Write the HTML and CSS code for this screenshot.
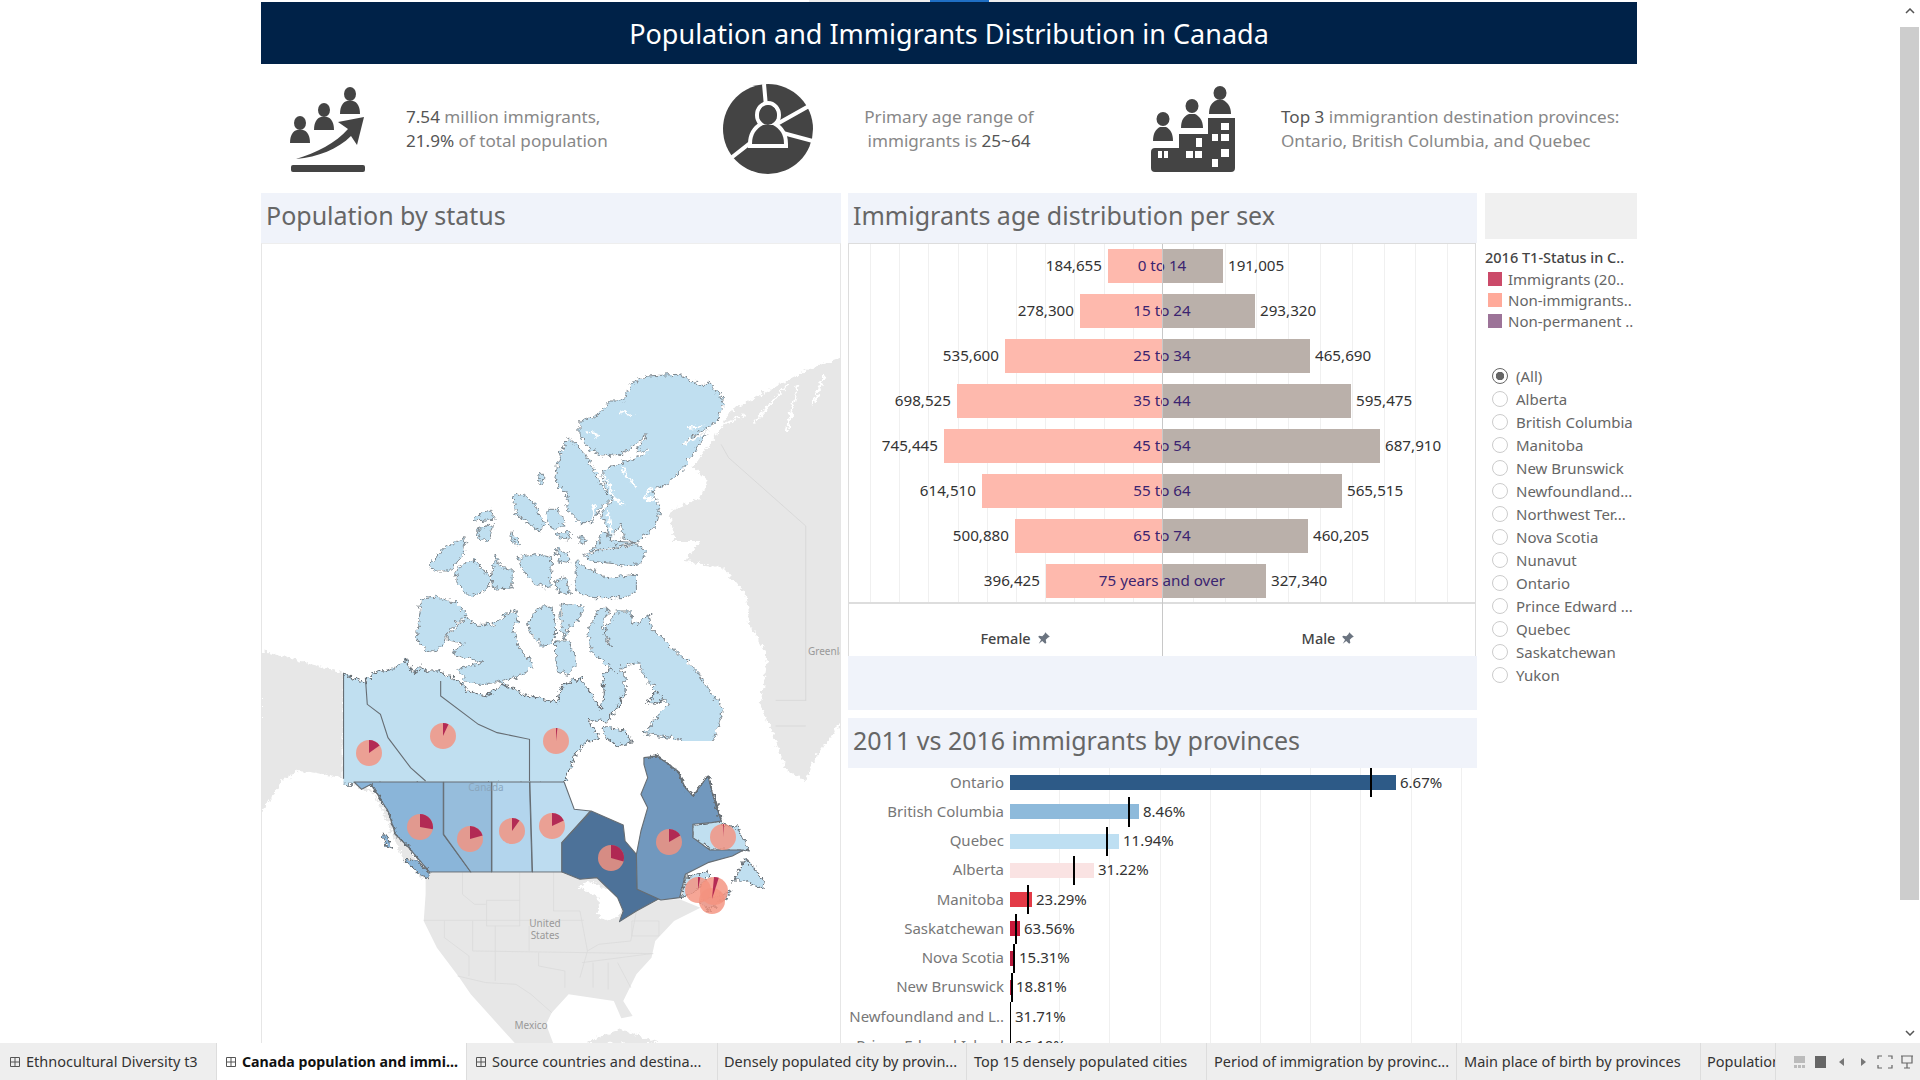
FILE: index.html
```html
<!DOCTYPE html>
<html lang="en">
<head>
    <meta charset="UTF-8">
    <title>Population and Immigrants Distribution in Canada</title>
    <link rel="stylesheet" href="styles.css">
</head>
<body>
    <div class="viewport">
        <div class="page">
            <div class="top-strip"><span></span></div>
            <h1 class="title">Population and Immigrants Distribution in Canada</h1>

            <div class="stats">
                <div class="stat stat-one">
                    <svg class="icon" width="76" height="88" viewBox="0 0 76 88">
                        <g class="glyph">
                            <ellipse cx="10" cy="38" rx="6" ry="7"/><path d="M0 58C0 50 3 46 7 45H13C17 46 20 50 20 58Z"/>
                            <ellipse cx="34" cy="25" rx="6" ry="7"/><path d="M24 45C24 37 27 33 31 32H37C41 33 44 37 44 45Z"/>
                            <ellipse cx="60" cy="9" rx="6" ry="7"/><path d="M50 29C50 21 53 17 57 16H63C67 17 70 21 70 29Z"/>
                            <path d="M6 74C26 68 46 58 58 44L48 37L74 32L67 60L61 51C48 64 28 72 6 74Z"/>
                            <rect x="1" y="80" width="74" height="7" rx="2"/>
                        </g>
                    </svg>
                    <p><b>7.54</b> million immigrants,<br><b>21.9%</b> of total population</p>
                </div>
                <div class="stat stat-two">
                    <svg class="icon" width="90" height="90" viewBox="0 0 90 90">
                        <circle class="glyph" cx="45" cy="45" r="45"/>
                        <path class="gap" d="M45 45L41 0M45 45L86 22M45 45L90 57M45 45L8 74"/>
                        <ellipse class="halo" cx="45" cy="31" rx="9" ry="10"/>
                        <path class="halo" d="M29 60C29 50 33 45 40 41H50C57 45 61 50 61 60Z"/>
                        <ellipse class="glyph" cx="45" cy="31" rx="9" ry="10"/>
                    </svg>
                    <p class="centered">Primary age range of<br>immigrants is <b>25~64</b></p>
                </div>
                <div class="stat stat-three">
                    <svg class="icon" width="84" height="86" viewBox="0 0 84 86">
                        <g class="glyph">
                            <ellipse cx="12" cy="33" rx="6.5" ry="7"/><path d="M2 55C2 47 5 43 9 41H15C19 43 22 47 22 55Z"/>
                            <ellipse cx="41" cy="20" rx="6.5" ry="7"/><path d="M30 42C30 34 33 30 38 28H44C48 30 52 34 52 42Z"/>
                            <ellipse cx="69" cy="7" rx="6.5" ry="7"/><path d="M58 28C58 20 61 16 66 14H72C76 16 80 20 80 28Z"/>
                            <path d="M0 66Q0 62 4 62H28V48H57V32H84V82Q84 86 80 86H4Q0 86 0 82Z"/>
                        </g>
                        <g class="windows">
                            <rect x="7" y="65" width="4" height="7"/><rect x="13" y="65" width="4" height="7"/>
                            <rect x="35" y="65" width="7" height="7"/><rect x="44" y="65" width="7" height="7"/>
                            <rect x="45" y="52" width="6" height="9"/>
                            <rect x="61" y="48" width="6" height="7"/><rect x="70" y="48" width="8" height="7"/>
                            <rect x="70" y="37" width="8" height="7"/><rect x="70" y="63" width="8" height="8"/>
                            <rect x="61" y="73" width="6" height="8"/>
                        </g>
                    </svg>
                    <p><b>Top 3</b> immigrantion destination provinces:<br>Ontario, British Columbia, and Quebec</p>
                </div>
            </div>

            <div class="panels">
                <section class="panel">
                    <h2 class="panel-head">Population by status</h2>
                    <div class="map">
                        <svg width="578" height="800" viewBox="262 243 578 800">
                            <defs>
                                <filter id="rough" filterUnits="userSpaceOnUse" x="0" y="-1100" width="1600" height="2300">
                                    <feTurbulence type="fractalNoise" baseFrequency=".08" numOctaves="3" seed="4"/>
                                    <feDisplacementMap in="SourceGraphic" scale="24" xChannelSelector="R" yChannelSelector="G"/>
                                </filter>
                                <clipPath id="east-of-yukon"><rect x="222" y="-1100" width="1400" height="2300"/></clipPath>
                            </defs>
                            <g transform="translate(260 680) scale(.3764 .3333)">
                                <g class="land" filter="url(#rough)">
                                    <path d="M0 -90L35 -85L100 -60L222 -25V293L150 275L100 270L60 300L5 395H0Z"/>
                                    <path d="M222 293L280 310L340 390L360 460L395 500L440 590L425 590L380 530L355 470L340 420L300 340L260 320Z"/>
                                    <path d="M1540 -970L1490 -950L1380 -890L1250 -810L1225 -760L1150 -640L1190 -600L1170 -550L1090 -510L1100 -420L1170 -420L1130 -360L1230 -340L1290 -260L1300 -170L1350 -70L1330 70L1370 180L1400 270L1450 300L1470 240L1560 100V-970Z"/>
                                    <path d="M860 1090L900 1070L960 1045L1060 1085Z"/>
                                    <path class="fjord" d="M1310 -770L1400 -890M1400 -750L1430 -890M1470 -830L1500 -920M1230 -770L1290 -800"/>
                                </g>
                                <path class="faint" d="M1225 -710L1245 -670L1450 -465V60M1370 58H1450M1370 135H1450"/>
                                <path class="land" d="M440 575H800L850 595L895 590L950 650L965 690L955 722L1000 690L1065 655L1115 655L1170 680L1100 720L1050 780L1040 830L1000 880L965 960L990 1005L960 1012L940 960L820 940L775 995L760 1030L780 1090H680L640 1040L560 940L530 890L470 800L435 720L440 640Z"/>
                                <path class="inland" filter="url(#rough)" d="M840 620L880 600L950 640L970 660L960 700L925 720L900 715L900 650L860 625Z"/>
                                <g class="border-us">
                                    <path d="M435 718H860M490 720V770L555 825V885M565 720V810M625 735V900M715 735V810M602 658H690V735H602ZM690 575V658M780 575V690H850L870 810L850 890"/>
                                    <path d="M565 810L1045 818M525 885L600 905L680 910L720 940L775 995M855 845L1040 818M988 720H1060V765H988ZM885 845V920M925 845V925M950 845L985 920M740 815V855L810 870V920M538 575V640L570 670H600M1000 690L985 780L900 790L870 810"/>
                                </g>
                                <g class="prov">
                                    <path class="p-north" filter="url(#rough)" clip-path="url(#east-of-yukon)" d="M210 -25L280 5L300 -25L350 -35L385 -65L410 -20L425 -45L440 -30L475 -30L530 0L550 30L600 45L650 10L700 40L790 65L800 15L850 -10L870 20L905 85L915 40L910 -10L930 -40L970 -30L970 40L925 120L870 115L905 175L870 180L835 225L808 310H210Z"/>
                                    <path class="p-fill" d="M222 20H300V293H222Z"/>
                                    <path class="p-north" filter="url(#rough)" d="M910 135L970 150L990 185L950 195L920 170Z"/>
                                    <path class="p-north" filter="url(#rough)" d="M1050 30L1080 40L1060 70L1030 65Z"/>
                                    <path class="p-bc" d="M250 303H487V460L560 573H450L395 500L360 460L340 390L295 310L270 325Z"/>
                                    <path class="p-bc" filter="url(#rough)" d="M385 535L415 540L450 575L445 590L410 570Z"/>
                                    <path class="p-bc" filter="url(#rough)" d="M325 455L340 465L350 505L335 495Z"/>
                                    <path class="p-ab" d="M488 303H615V573H560L488 460Z"/>
                                    <path class="p-sk" d="M616 303H716L723 573H616Z"/>
                                    <path class="p-mb" d="M717 303H808L835 385L878 390L802 485V573H724Z"/>
                                    <path class="p-on" d="M880 390L965 432L970 480L1000 520L1002 625L1065 650L1000 690L955 722L965 690L950 650L895 590L850 595L802 573V485Z"/>
                                    <path class="p-north" filter="url(#rough)" d="M1190 285L1230 430L1270 440L1300 510L1285 507H1195L1150 470V430L1200 425L1225 420L1205 350Z"/>
                                    <path class="p-qc" d="M1020 230L1055 225L1110 270L1130 320L1150 345L1190 285L1205 350L1225 420L1200 425L1150 430L1150 470L1195 507H1285L1255 525L1190 545L1130 580L1115 650L1065 657L1002 625L1000 520L1012 450L1030 380L1012 340L1030 290L1020 250Z"/>
                                    <path class="p-north" filter="url(#rough)" d="M1290 530L1340 600L1335 625L1290 600L1255 600L1280 560Z"/>
                                    <path class="p-north" filter="url(#rough)" d="M1130 590L1190 570L1195 582L1150 640L1120 650Z"/>
                                    <path class="p-north" filter="url(#rough)" d="M1170 660L1250 630L1240 650L1190 690Z"/>
                                </g>
                                <path class="coast" filter="url(#rough)" d="M295 310L340 390L360 460L395 500L450 575M1190 285L1205 350L1225 420M1020 230L1055 225L1110 270L1130 320L1150 345L1190 285"/>
                                <path class="terr" d="M222 -25V293M280 -10L285 70L320 100L340 170L400 260L440 300M480 0V45L580 130L630 155L716 175V300"/>
                            </g>
                            <g class="prov islands" transform="translate(260 340) scale(.3764 .3333)">
                                <g filter="url(#rough)">
                                <path class="p-north" d="M430 775L470 768L520 785L550 820L500 870L490 910L455 935L430 915L415 890Z"/>
                                <path class="p-north" d="M500 880L550 825L565 850L600 850L615 855L640 830L655 820L680 810L685 840L670 860L690 920L725 970L700 1000L650 1020L610 1030L560 1030L520 985L580 970L595 965L540 950L510 935L540 910L500 900Z"/>
                                <path class="p-north" d="M710 850L740 800L775 795L785 850L785 890L755 920L720 880Z"/>
                                <path class="p-north" d="M800 790L860 795L850 830L820 860L810 895L800 860Z"/>
                                <path class="p-north" d="M785 900L820 900L845 970L820 1000L790 990L785 940Z"/>
                                <path class="p-north" d="M870 870L900 805L930 805L910 850L925 910L935 920L915 870L945 810L985 810L990 850L1035 825L1040 860L1080 905L1160 990L1230 1105V1115L1190 1240L1100 1190L1020 1180L1060 1120L1085 1090L1030 1020L1005 965L960 980L950 1000L900 950L880 930Z"/>
                                <path class="p-north" d="M860 640L1000 610L1022 630L1015 665L985 675L880 660Z"/>
                                <path class="p-north" d="M840 660L870 680L920 710L1000 700L1000 750L970 770L880 770L840 750Z"/>
                                <path class="p-north" d="M785 620L820 640L820 665L795 660Z"/>
                                <path class="p-north" d="M450 680L490 620L545 590L540 640L505 690L470 690Z"/>
                                <path class="p-north" d="M525 680L570 655L610 710L610 740L560 770L520 720Z"/>
                                <path class="p-north" d="M615 700L625 640L640 680L670 685L670 740L620 745L615 720Z"/>
                                <path class="p-north" d="M685 650L740 640L775 650L770 740L730 730L700 690Z"/>
                                <path class="p-north" d="M785 720L815 710L825 760L790 750Z"/>
                                <path class="p-north" d="M570 530L610 505L625 535L570 540Z"/>
                                <path class="p-north" d="M575 565L620 550L610 595L585 600Z"/>
                                <path class="p-north" d="M672 465L700 460L730 490L755 550L745 570L710 545L680 520Z"/>
                                <path class="p-north" d="M762 505L790 505L810 545L780 570L765 540Z"/>
                                <path class="p-north" d="M790 575L825 575L820 595L795 590Z"/>
                                <path class="p-north" d="M850 585L870 595L865 610L850 605Z"/>
                                <path class="p-north" d="M670 575L690 610L680 615L665 585Z"/>
                                <path class="p-north" d="M740 400L757 400L755 430L745 430Z"/>
                                <path class="p-north" d="M905 570L920 575L935 600L1000 605L880 630L900 600Z"/>
                                <path class="p-north" d="M960 180L990 125L1030 105L1110 100L1165 130L1200 130L1232 180L1215 240L1120 310L1190 270L1150 340L1115 395L1080 430L1040 450L1065 500L1050 560L1000 605L965 590L960 550L930 595L920 550L905 520L935 480L915 430L910 390L945 370L1000 350L1030 330L1000 330L1030 280L960 340L910 345L870 320L850 280L850 240L900 220L930 180Z"/>
                                <path class="p-north" d="M820 290L850 320L880 370L905 430L935 470L900 510L880 545L850 545L820 510L815 465L785 420L790 370L800 330Z"/>
                                <path class="cut" d="M880 350L940 365L1035 330M960 380L1000 440M1120 310L1190 272M915 400L940 470L965 490M890 490L880 540M1060 480L1020 470L1040 440M925 510L935 590M1140 260L1180 255M960 210L990 225M870 270L900 285"/>
                                </g>
                            </g>
                            <g class="pies">
                                <g transform="translate(369 752)"><circle r="13"/><path d="M0 0V-13A13 13 0 0 1 10.6 -7.5Z"/></g>
                                <g transform="translate(443 735)"><circle r="13"/><path d="M0 0V-13A13 13 0 0 1 5.5 -11.8Z"/></g>
                                <g transform="translate(556 740)"><circle r="13"/><path d="M0 0V-13A13 13 0 0 1 1.4 -12.9Z"/></g>
                                <g transform="translate(420 826)"><circle r="13"/><path d="M0 0V-13A13 13 0 0 1 12.8 2.3Z"/></g>
                                <g transform="translate(470 838)"><circle r="13"/><path d="M0 0V-13A13 13 0 0 1 12.6 -3.4Z"/></g>
                                <g transform="translate(512 830)"><circle r="13"/><path d="M0 0V-13A13 13 0 0 1 7.5 -10.6Z"/></g>
                                <g transform="translate(552 825)"><circle r="13"/><path d="M0 0V-13A13 13 0 0 1 11.8 -5.5Z"/></g>
                                <g transform="translate(611 857)"><circle r="13"/><path d="M0 0V-13A13 13 0 0 1 12.6 3.4Z"/></g>
                                <g transform="translate(669 841)"><circle r="13"/><path d="M0 0V-13A13 13 0 0 1 11.3 -6.5Z"/></g>
                                <g transform="translate(723 836)"><circle r="13"/><path d="M0 0V-13A13 13 0 0 1 .9 -13Z"/></g>
                                <g transform="translate(698 889)"><circle r="13"/><path d="M0 0V-13A13 13 0 0 1 2.3 -12.8Z"/></g>
                                <g transform="translate(712 900)"><circle r="13"/></g>
                                <g transform="translate(714 890)"><circle r="14"/><path d="M-2 8L0 -14A14 14 0 0 1 4.8 -13.2Z"/></g>
                            </g>
                            <text class="map-label canada" x="486" y="790" text-anchor="middle">Canada</text>
                            <text class="map-label" x="545" y="926" text-anchor="middle">United</text>
                            <text class="map-label" x="545" y="938" text-anchor="middle">States</text>
                            <text class="map-label" x="531" y="1028" text-anchor="middle">Mexico</text>
                            <text class="map-label" x="808" y="654">Greenland</text>
                        </svg>
                    </div>
                </section>

                <section class="panel">
                    <h2 class="panel-head">Immigrants age distribution per sex</h2>
                    <div class="pyramid">
                        <div class="pyramid-plot">
                            <div class="age-row">
                                <div class="side side-f"><span>184,655</span><i style="width:54px"></i></div>
                                <div class="side side-m"><i style="width:61px"></i><span>191,005</span></div>
                                <em>0 to 14</em>
                            </div>
                            <div class="age-row">
                                <div class="side side-f"><span>278,300</span><i style="width:82px"></i></div>
                                <div class="side side-m"><i style="width:93px"></i><span>293,320</span></div>
                                <em>15 to 24</em>
                            </div>
                            <div class="age-row">
                                <div class="side side-f"><span>535,600</span><i style="width:157px"></i></div>
                                <div class="side side-m"><i style="width:148px"></i><span>465,690</span></div>
                                <em>25 to 34</em>
                            </div>
                            <div class="age-row">
                                <div class="side side-f"><span>698,525</span><i style="width:205px"></i></div>
                                <div class="side side-m"><i style="width:189px"></i><span>595,475</span></div>
                                <em>35 to 44</em>
                            </div>
                            <div class="age-row">
                                <div class="side side-f"><span>745,445</span><i style="width:218px"></i></div>
                                <div class="side side-m"><i style="width:218px"></i><span>687,910</span></div>
                                <em>45 to 54</em>
                            </div>
                            <div class="age-row">
                                <div class="side side-f"><span>614,510</span><i style="width:180px"></i></div>
                                <div class="side side-m"><i style="width:180px"></i><span>565,515</span></div>
                                <em>55 to 64</em>
                            </div>
                            <div class="age-row">
                                <div class="side side-f"><span>500,880</span><i style="width:147px"></i></div>
                                <div class="side side-m"><i style="width:146px"></i><span>460,205</span></div>
                                <em>65 to 74</em>
                            </div>
                            <div class="age-row">
                                <div class="side side-f"><span>396,425</span><i style="width:116px"></i></div>
                                <div class="side side-m"><i style="width:104px"></i><span>327,340</span></div>
                                <em>75 years and over</em>
                            </div>
                        </div>
                        <div class="sex-row">
                            <div class="sex">Female <svg width="14" height="14" viewBox="0 0 12 12"><path d="M7 1L11 5L9.5 5.5L7.5 7.5L8 10L7 11L4.5 8.5L1.5 11L3.5 7.5L1 5L2 4L4.5 4.5L6.5 2.5Z"/></svg></div>
                            <div class="sex">Male <svg width="14" height="14" viewBox="0 0 12 12"><path d="M7 1L11 5L9.5 5.5L7.5 7.5L8 10L7 11L4.5 8.5L1.5 11L3.5 7.5L1 5L2 4L4.5 4.5L6.5 2.5Z"/></svg></div>
                        </div>
                        <div class="axis"></div>
                    </div>
                    <div class="band"></div>
                    <h2 class="panel-head second">2011 vs 2016 immigrants by provinces</h2>
                    <div class="bars">
                        <div class="bar-row"><label>Ontario</label><div class="plot"><i class="c1" style="width:386px"></i><span>6.67%</span><b style="left:360px"></b></div></div>
                        <div class="bar-row"><label>British Columbia</label><div class="plot"><i class="c2" style="width:129px"></i><span>8.46%</span><b style="left:118px"></b></div></div>
                        <div class="bar-row"><label>Quebec</label><div class="plot"><i class="c3" style="width:109px"></i><span>11.94%</span><b style="left:96px"></b></div></div>
                        <div class="bar-row"><label>Alberta</label><div class="plot"><i class="c4" style="width:84px"></i><span>31.22%</span><b style="left:63px"></b></div></div>
                        <div class="bar-row"><label>Manitoba</label><div class="plot"><i class="c5" style="width:22px"></i><span>23.29%</span><b style="left:17px"></b></div></div>
                        <div class="bar-row"><label>Saskatchewan</label><div class="plot"><i class="c6" style="width:10px"></i><span>63.56%</span><b style="left:5px"></b></div></div>
                        <div class="bar-row"><label>Nova Scotia</label><div class="plot"><i class="c7" style="width:5px"></i><span>15.31%</span><b style="left:3px"></b></div></div>
                        <div class="bar-row"><label>New Brunswick</label><div class="plot"><i class="c7" style="width:2px"></i><span>18.81%</span><b style="left:1px"></b></div></div>
                        <div class="bar-row"><label>Newfoundland and L..</label><div class="plot"><i class="c7" style="width:1px"></i><span>31.71%</span><b class="thin" style="left:0"></b></div></div>
                        <div class="bar-row"><label>Prince Edward Island</label><div class="plot"><i class="c7" style="width:1px"></i><span>26.10%</span><b class="thin" style="left:0"></b></div></div>
                    </div>
                </section>

                <aside class="side-col">
                    <div class="side-head"></div>
                    <h3 class="legend-title">2016 T1-Status in C..</h3>
                    <ul class="legend">
                        <li><i class="lg1"></i>Immigrants (20..</li>
                        <li><i class="lg2"></i>Non-immigrants..</li>
                        <li><i class="lg3"></i>Non-permanent ..</li>
                    </ul>
                    <ul class="radios">
                        <li class="checked"><i></i>(All)</li>
                        <li><i></i>Alberta</li>
                        <li><i></i>British Columbia</li>
                        <li><i></i>Manitoba</li>
                        <li><i></i>New Brunswick</li>
                        <li><i></i>Newfoundland...</li>
                        <li><i></i>Northwest Ter...</li>
                        <li><i></i>Nova Scotia</li>
                        <li><i></i>Nunavut</li>
                        <li><i></i>Ontario</li>
                        <li><i></i>Prince Edward ...</li>
                        <li><i></i>Quebec</li>
                        <li><i></i>Saskatchewan</li>
                        <li><i></i>Yukon</li>
                    </ul>
                </aside>
            </div>
        </div>
        <div class="scrollbar">
            <svg width="10" height="6" viewBox="0 0 10 6"><path d="M1 5L5 1L9 5"/></svg>
            <div class="thumb"></div>
            <svg class="down" width="10" height="6" viewBox="0 0 10 6"><path d="M1 1L5 5L9 1"/></svg>
        </div>
    </div>

    <div class="tabs">
        <div class="tab t1"><svg width="10" height="10" viewBox="0 0 10 10"><path d="M.5 .5H9.5V9.5H.5ZM5 .5V9.5M.5 5H9.5"/></svg>Ethnocultural Diversity t3</div>
        <div class="tab t2 active"><svg width="10" height="10" viewBox="0 0 10 10"><path d="M.5 .5H9.5V9.5H.5ZM5 .5V9.5M.5 5H9.5"/></svg>Canada population and immi...</div>
        <div class="tab t3"><svg width="10" height="10" viewBox="0 0 10 10"><path d="M.5 .5H9.5V9.5H.5ZM5 .5V9.5M.5 5H9.5"/></svg>Source countries and destina...</div>
        <div class="tab t4">Densely populated city by provin...</div>
        <div class="tab t5">Top 15 densely populated cities</div>
        <div class="tab t6">Period of immigration by provinc...</div>
        <div class="tab t7">Main place of birth by provinces</div>
        <div class="tab t8">Population by provinces</div>
        <div class="controls">
            <svg width="120" height="14" viewBox="0 0 120 14">
                <path class="light" d="M0 1H11V8H0ZM0 10H3V13H0ZM4 10H7V13H4ZM8 10H11V13H8Z"/>
                <rect class="dark" x="21" y="1" width="11" height="12"/>
                <path class="mid" d="M50 3V11L45 7ZM67 3V11L72 7Z"/>
                <path class="line" d="M84 4V1H88M94 1H98V4M98 10V13H94M88 13H84V10"/>
                <path class="line" d="M107 1H119M108 1V8H118V1M113 8V13M110 13H116"/>
            </svg>
        </div>
    </div>
</body>
</html>
```

FILE: styles.css
```css
* {
    box-sizing: border-box;
}

body {
    margin: 0;
    height: 100vh;
    display: flex;
    flex-direction: column;
    overflow: hidden;
    background: #fff;
    font-family: "Noto Sans", Roboto, sans-serif;
    color: #333;
}

.viewport {
    flex: 1;
    min-height: 0;
    display: flex;
}

.page {
    flex: 1;
    min-width: 0;
    overflow: hidden;
    padding-left: 261px;
}

.top-strip {
    width: 301px;
    height: 2px;
    margin-left: 548px;
    background: #eee;
    padding-left: 121px;
}

.top-strip span {
    display: block;
    width: 59px;
    height: 2px;
    background: #1f6fc4;
}

.title {
    width: 1376px;
    height: 62px;
    margin: 0;
    background: #002248;
    color: #fff;
    font-size: 27px;
    font-weight: 400;
    line-height: 63px;
    text-align: center;
}

/* summary row */
.stats {
    width: 1376px;
    height: 129px;
    display: grid;
    grid-template-columns: 462px 428px 486px;
}

.stat {
    display: flex;
    align-items: center;
}

.stat p {
    margin: 0;
    font-size: 17.1px;
    line-height: 24px;
    color: #888;
}

.stat b {
    font-weight: 400;
    color: #555;
}

.stat .centered {
    width: 272px;
    text-align: center;
}

.stat-one {
    padding-left: 29px;
    gap: 40px;
}

.stat-three {
    gap: 46px;
}

.glyph {
    fill: #444;
}

.gap {
    stroke: #fff;
    stroke-width: 4;
    fill: none;
}

.halo {
    fill: #444;
    stroke: #fff;
    stroke-width: 8;
    paint-order: stroke;
}

.windows {
    fill: #fff;
}

/* dashboard panels */
.panels {
    width: 1376px;
    display: grid;
    grid-template-columns: 580px 629px 153px;
    column-gap: 7px;
}

.side-col {
    margin-left: 1px;
}

.panel-head {
    height: 50px;
    margin: 0;
    padding-left: 5px;
    background: #f0f3fa;
    color: #666;
    font-size: 25px;
    font-weight: 400;
    line-height: 45px;
}

.map {
    height: 800px;
    border-left: 1px solid #e6e6e6;
    border-right: 1px solid #e6e6e6;
    border-top: 1px solid #eee;
    overflow: hidden;
}

.map svg {
    display: block;
}

.land {
    fill: #e7e7e7;
}

.inland {
    fill: #fff;
}

.fjord {
    fill: none;
    stroke: #fff;
    stroke-width: 6;
}

.prov .cut {
    fill: none;
    stroke: #fff;
    stroke-width: 2.2;
}

.border-us {
    fill: none;
    stroke: #dadada;
}

.border-us path,
.prov path,
.terr,
.coast,
.faint {
    vector-effect: non-scaling-stroke;
}

.border-us path {
    stroke-width: .8;
}

.prov path {
    stroke: #666d73;
    stroke-width: 1.1;
    stroke-linejoin: round;
}

.islands path {
    stroke-width: .8;
}

.prov .p-fill {
    fill: #c0dff0;
    stroke: none;
}

.terr {
    fill: none;
    stroke: #666d73;
    stroke-width: 1.1;
}

.coast {
    fill: none;
    stroke: #666d73;
    stroke-width: 1.4;
}

.faint {
    fill: none;
    stroke: #d6d6d6;
    stroke-width: .8;
}

.p-north { fill: #c0dff0; }
.p-bc { fill: #8ab5d9; }
.p-ab { fill: #96bddc; }
.p-sk { fill: #b3d5ed; }
.p-mb { fill: #bddcf0; }
.p-on { fill: #4d7299; }
.p-qc { fill: #7198be; }

.pies circle {
    fill: #f4937f;
    fill-opacity: .82;
}

.pies path {
    fill: #a9164a;
    fill-opacity: .85;
}

.map-label {
    font-size: 10px;
    fill: #999;
}

.canada {
    fill: #8aa6bd;
}

/* age pyramid */
.pyramid {
    position: relative;
    width: 628px;
    height: 413px;
    border-left: 1px solid #ddd;
    border-right: 1px solid #ddd;
    border-top: 1px solid #ddd;
}

.pyramid-plot {
    height: 360px;
    padding-top: 5px;
    display: flex;
    flex-direction: column;
    gap: 11px;
    border-bottom: 2px solid #ddd;
    background:
        repeating-linear-gradient(to left, transparent 0 28.2px, #f0f0f0 28.2px 29.2px) left / 50% 100% no-repeat,
        repeating-linear-gradient(to right, transparent 0 30.8px, #f0f0f0 30.8px 31.8px) right / 50% 100% no-repeat;
}

.age-row {
    position: relative;
    display: grid;
    grid-template-columns: 1fr 1fr;
    height: 34px;
    font-size: 15.2px;
    line-height: 33px;
}

.side {
    display: flex;
    gap: 5px;
}

.side-f {
    justify-content: flex-end;
    gap: 6px;
}

.side i {
    display: block;
    height: 34px;
}

.side-f i {
    background: #feb9ad;
}

.side-m i {
    background: #bab0aa;
}

.age-row em {
    position: absolute;
    top: 0;
    left: 50%;
    transform: translateX(-50%);
    font-style: normal;
    color: #3b2470;
    white-space: nowrap;
}

.axis {
    position: absolute;
    top: 0;
    bottom: 0;
    left: 313px;
    width: 1px;
    background: #c8c8c8;
}

.sex-row {
    display: grid;
    grid-template-columns: 1fr 1fr;
    height: 52px;
}

.sex {
    display: flex;
    align-items: flex-end;
    justify-content: center;
    gap: 6px;
    padding: 0 0 9px 20px;
    font-size: 14.5px;
    font-weight: 500;
    line-height: 18px;
    color: #444;
}

.sex svg {
    margin-bottom: 2px;
    fill: #6b7480;
}

.band {
    height: 54px;
    background: #f0f3fa;
}

.second {
    margin-top: 8px;
}

/* province bars */
.bars {
    width: 628px;
    height: 300px;
    background: repeating-linear-gradient(to right, transparent 0 49.2px, #f0f0f0 49.2px 50.2px) right / 466px 100% no-repeat;
}

.bar-row {
    display: flex;
    height: 29.25px;
    align-items: center;
    font-size: 15px;
}

.bar-row label {
    width: 156px;
    flex: none;
    margin-bottom: 2px;
    text-align: right;
    white-space: nowrap;
    color: #777;
}

.plot {
    position: relative;
    flex: 1;
    height: 100%;
    margin-left: 6px;
    display: flex;
    align-items: center;
    gap: 4px;
}

.plot i {
    display: block;
    height: 15px;
}

.plot span {
    margin-bottom: 2px;
    color: #333;
}

.plot b {
    position: absolute;
    top: 0;
    width: 2px;
    height: 100%;
    background: #000;
}

.plot b.thin {
    width: 1px;
}

.c1 { background: #2d5a87; }
.c2 { background: #8ebadb; }
.c3 { background: #bedff2; }
.c4 { background: #fae3e3; }
.c5 { background: #e33a46; }
.c6 { background: #c8183a; }
.c7 { background: #b81a3c; }

/* legend and filter column */
.side-head {
    height: 46px;
    background: #f0f0f0;
}

.legend-title {
    margin: 9px 0 0;
    font-size: 14.5px;
    font-weight: 500;
    line-height: 18px;
    color: #444;
    white-space: nowrap;
}

.legend,
.radios {
    list-style: none;
    margin: 0;
    padding: 0;
    font-size: 15px;
    color: #666;
}

.legend {
    padding: 2px 0 0 3px;
}

.legend li {
    display: flex;
    align-items: center;
    gap: 6px;
    height: 21px;
    white-space: nowrap;
}

.legend i {
    width: 14px;
    height: 14px;
}

.lg1 { background: #cb4a69; }
.lg2 { background: #ffaa9a; }
.lg3 { background: #9c7398; }

.radios {
    margin-top: 33px;
    padding-left: 7px;
}

.radios li {
    display: flex;
    align-items: center;
    gap: 8px;
    height: 23px;
    white-space: nowrap;
}

.radios i {
    width: 16px;
    height: 16px;
    border: 1px solid #ccc;
    border-radius: 50%;
}

.radios .checked i {
    border-color: #666;
    background: radial-gradient(circle, #666 0 4px, #fff 4.5px);
}

/* scrollbar */
.scrollbar {
    width: 20px;
    display: flex;
    flex-direction: column;
    align-items: center;
    padding-top: 8px;
}

.scrollbar svg {
    fill: none;
    stroke: #555;
    stroke-width: 1.5;
    flex: none;
}

.thumb {
    width: 19px;
    height: 873px;
    margin: 13px 1px 0 0;
    background: #cdcdcd;
}

.scrollbar .down {
    margin-top: auto;
    margin-bottom: 7px;
}

/* sheet tabs */
.tabs {
    height: 37px;
    flex: none;
    display: flex;
    background: #eee;
    font-size: 14.5px;
    line-height: 37px;
    color: #333;
}

.tab {
    display: flex;
    align-items: center;
    gap: 6px;
    padding-left: 10px;
    flex: none;
    overflow: hidden;
    white-space: nowrap;
    border-right: 1px solid #ddd;
}

.tab svg {
    fill: none;
    stroke: #555;
    flex: none;
}

.t1 { width: 217px; }
.t2 { width: 250px; padding-left: 9px; font-size: 14.2px; }
.t3 { width: 251px; padding-left: 9px; }
.t4 { width: 249px; padding-left: 6px; }
.t5 { width: 240px; padding-left: 7px; }
.t6 { width: 250px; padding-left: 7px; }
.t7 { width: 244px; padding-left: 7px; }
.t8 { width: 75px; padding-left: 6px; }

.active {
    background: #fff;
    color: #111;
    font-weight: 700;
}

.controls {
    flex: 1;
    display: flex;
    align-items: center;
    padding-left: 18px;
}

.controls .light { fill: #bbb; }
.controls .dark { fill: #666; }
.controls .mid { fill: #777; }
.controls .line {
    fill: none;
    stroke: #666;
    stroke-width: 1.2;
}
```
